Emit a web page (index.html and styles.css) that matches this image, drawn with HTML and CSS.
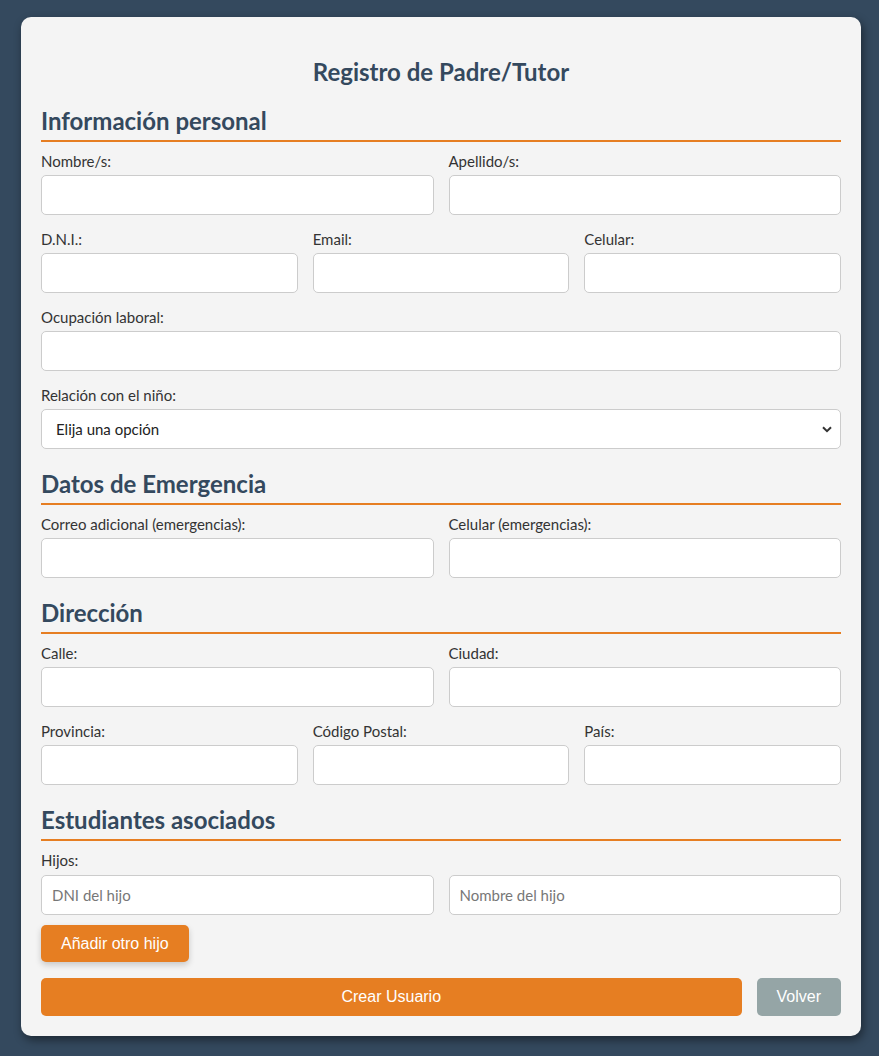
FILE: index.html
```html
<!DOCTYPE html>
<html lang="es">
<head>
<meta charset="utf-8">
<title>Registro de Padre/Tutor</title>
<link rel="stylesheet" href="styles.css">
</head>
<body>
<div class="card">
  <h2 class="title">Registro de Padre/Tutor</h2>

  <h3 class="section">Información personal</h3>
  <div class="row cols-2">
    <div class="group"><label>Nombre/s:</label><input class="field" type="text"></div>
    <div class="group"><label>Apellido/s:</label><input class="field" type="text"></div>
  </div>
  <div class="row cols-3">
    <div class="group"><label>D.N.I.:</label><input class="field" type="text"></div>
    <div class="group"><label>Email:</label><input class="field" type="text"></div>
    <div class="group"><label>Celular:</label><input class="field" type="text"></div>
  </div>
  <div class="group single"><label>Ocupación laboral:</label><input class="field" type="text"></div>
  <div class="group single"><label>Relación con el niño:</label>
    <div class="select">
      <span>Elija una opción</span>
      <svg width="10" height="7" viewBox="0 0 10 7"><path d="M1 1.2 L5 5.2 L9 1.2" fill="none" stroke="#333" stroke-width="2"/></svg>
    </div>
  </div>

  <h3 class="section">Datos de Emergencia</h3>
  <div class="row cols-2">
    <div class="group"><label>Correo adicional (emergencias):</label><input class="field" type="text"></div>
    <div class="group"><label>Celular (emergencias):</label><input class="field" type="text"></div>
  </div>

  <h3 class="section">Dirección</h3>
  <div class="row cols-2">
    <div class="group"><label>Calle:</label><input class="field" type="text"></div>
    <div class="group"><label>Ciudad:</label><input class="field" type="text"></div>
  </div>
  <div class="row cols-3">
    <div class="group"><label>Provincia:</label><input class="field" type="text"></div>
    <div class="group"><label>Código Postal:</label><input class="field" type="text"></div>
    <div class="group"><label>País:</label><input class="field" type="text"></div>
  </div>

  <h3 class="section">Estudiantes asociados</h3>
  <label class="hijos-label">Hijos:</label>
  <div class="row cols-2 hijos">
    <input class="field" type="text" placeholder="DNI del hijo">
    <input class="field" type="text" placeholder="Nombre del hijo">
  </div>
  <button class="btn btn-add" type="button">Añadir otro hijo</button>
  <div class="actions">
    <button class="btn btn-primary" type="button">Crear Usuario</button>
    <button class="btn btn-back" type="button">Volver</button>
  </div>
</div>
</body>
</html>
```
FILE: styles.css
```css
html, body {
  margin: 0;
  padding: 0;
}
body {
  background: #34495e;
  font-family: "Lato", "Liberation Sans", sans-serif;
  color: #333;
  padding: 17px 0 20px 21px;
}
.card {
  width: 800px;
  background: #f4f4f4;
  border-radius: 10px;
  padding: 20px;
  box-shadow: 2px 4px 10px rgba(0, 0, 0, 0.45);
}
.title {
  margin: 20px 0 20px;
  text-align: center;
  font-size: 24px;
  font-weight: 700;
  line-height: 29px;
  color: #34495e;
}
.section {
  margin: 20px 0 10px;
  padding-bottom: 5px;
  border-bottom: 2px solid #e67e22;
  font-size: 24px;
  font-weight: 700;
  line-height: 29px;
  color: #34495e;
}
.title + .section {
  margin-top: 0;
}
.row {
  display: grid;
  gap: 15px;
  margin-bottom: 15px;
}
.cols-2 { grid-template-columns: 1fr 1fr; }
.cols-3 { grid-template-columns: 1fr 1fr 1fr; }
.group.single {
  margin-bottom: 15px;
}
label {
  display: block;
  font-size: 15px;
  line-height: 18px;
  margin-bottom: 5px;
  color: #333;
}
.field {
  display: block;
  box-sizing: border-box;
  width: 100%;
  height: 40px;
  border: 1px solid #ccc;
  border-radius: 5px;
  background: #fff;
  padding: 0 10px;
  font-family: "Lato", sans-serif;
  font-size: 15px;
  color: #333;
  margin: 0;
}
.field::placeholder {
  color: #777;
}
.select {
  box-sizing: border-box;
  height: 40px;
  border: 1px solid #ccc;
  border-radius: 5px;
  background: #fff;
  padding: 0 8px 0 14px;
  display: flex;
  align-items: center;
  justify-content: space-between;
  font-size: 15px;
  color: #222;
}
.hijos-label {
  margin-bottom: 6px;
}
.row.hijos {
  margin-bottom: 10px;
}
.btn {
  font-family: "Liberation Sans", Arial, sans-serif;
  font-size: 16px;
  line-height: 18px;
  border: none;
  border-radius: 5px;
  padding: 10px 20px;
  color: #fff;
  cursor: pointer;
}
.btn-add {
  display: block;
  line-height: 17px;
  background: #e67e22;
  box-shadow: 0 3px 6px rgba(0, 0, 0, 0.18);
}
.actions {
  display: flex;
  gap: 15px;
  margin-top: 16px;
}
.btn-primary {
  flex: 1;
  background: #e67e22;
}
.btn-back {
  background: #95a5a6;
}
```
